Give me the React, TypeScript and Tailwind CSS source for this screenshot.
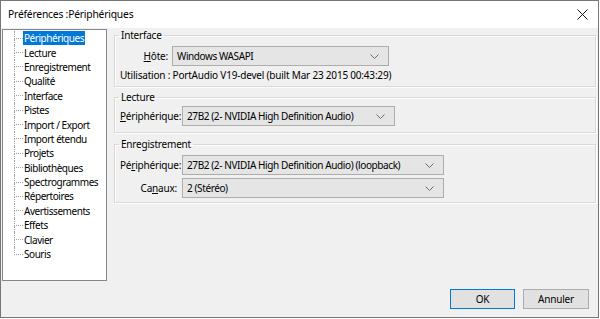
import type { ReactNode } from "react";

const items = [
  "Périphériques",
  "Lecture",
  "Enregistrement",
  "Qualité",
  "Interface",
  "Pistes",
  "Import / Export",
  "Import étendu",
  "Projets",
  "Bibliothèques",
  "Spectrogrammes",
  "Répertoires",
  "Avertissements",
  "Effets",
  "Clavier",
  "Souris",
];

function Chevron() {
  return (
    <svg width="9" height="5" viewBox="0 0 9 5" className="shrink-0">
      <path d="M0.5 0.5 L4.5 4.5 L8.5 0.5" fill="none" stroke="#6d6d6d" strokeWidth="1" />
    </svg>
  );
}

function Combo({ value, width }: { value: string; width: string }) {
  return (
    <div
      className={`flex h-[20px] ${width} items-center justify-between border border-[#adadad] bg-[#e5e5e5] pl-[4px] pr-[9px]`}
    >
      <span className="tracking-[-0.4px]">{value}</span>
      <Chevron />
    </div>
  );
}

function Group({ title, children, className }: { title: string; children: ReactNode; className?: string }) {
  return (
    <fieldset
      className={`border border-[#d8d8d8] px-0 shadow-[inset_1px_1px_0_#fff,1px_1px_0_#fff] ${className ?? ""}`}
    >
      <legend className="ml-[4px] px-[2px] leading-[15px]">{title}</legend>
      {children}
    </fieldset>
  );
}

export default function App() {
  return (
    <div
      className="flex h-[318px] w-[599px] flex-col whitespace-nowrap border border-[#767676] bg-[#f0f0f0] text-[10px] tracking-[-0.2px] text-black"
      style={{ fontFamily: '"Noto Sans", "Open Sans", sans-serif' }}
    >
      {/* barre de titre */}
      <div className="flex h-[27px] shrink-0 items-center justify-between bg-white pl-[7px] pr-[8px]">
        <span className="text-[10.3px]">Préférences :Périphériques</span>
        <svg width="11" height="11" viewBox="0 0 11 11" className="mr-[2px]">
          <path d="M0.5 0.5 L10.5 10.5 M10.5 0.5 L0.5 10.5" stroke="#111" strokeWidth="1" />
        </svg>
      </div>

      <div className="flex flex-1 flex-col">
        <div className="flex h-[253px] pt-[1px]">
          {/* arbre */}
          <div className="ml-[1px] h-[252px] w-[105px] border border-[#828790] bg-white pl-[11px] pt-[1px] tracking-[-0.45px]">
            {items.map((label, i) => (
              <div key={label} className="flex h-[14.4px] items-stretch">
                <div className="flex w-[9px] flex-col">
                  <div className="flex-1 border-b border-l border-dotted border-[#a0a0a0]" />
                  <div className={`flex-1 ${i < items.length - 1 ? "border-l border-dotted border-[#a0a0a0]" : ""}`} />
                </div>
                <span
                  className={`flex items-center px-[1px] leading-[14px] ${
                    i === 0 ? "bg-[#0078d7] text-white" : ""
                  }`}
                >
                  {label}
                </span>
              </div>
            ))}
          </div>

          {/* panneaux */}
          <div className="ml-[7px] flex w-[482px] flex-col">
            <Group title="Interface" className="-mt-[1px] h-[59px]">
              <div className="mt-[3px] flex items-center">
                <span className="w-[53px] text-right">
                  <u>H</u>ôte:
                </span>
                <div className="ml-[4px]">
                  <Combo value="Windows WASAPI" width="w-[217px]" />
                </div>
              </div>
              <div className="mt-[2px] pl-[5px] leading-[15px]">
                Utilisation : PortAudio V19-devel (built Mar 23 2015 00:43:29)
              </div>
            </Group>

            <Group title="Lecture" className="mt-[3px] h-[43px]">
              <div className="mt-[1px] flex items-center pl-[5px]">
                <span className="w-[62px]">
                  <u>P</u>ériphérique:
                </span>
                <Combo value="27B2 (2- NVIDIA High Definition Audio)" width="w-[213px]" />
              </div>
            </Group>

            <Group title="Enregistrement" className="mt-[4px] h-[66px]">
              <div className="mt-[3px] flex items-center pl-[5px]">
                <span className="w-[62px]">
                  Pé<u>r</u>iphérique:
                </span>
                <Combo value="27B2 (2- NVIDIA High Definition Audio) (loopback)" width="w-[262px]" />
              </div>
              <div className="mt-[3px] flex items-center pl-[5px]">
                <span className="w-[57px] text-right">
                  Ca<u>n</u>aux:
                </span>
                <div className="ml-[5px]">
                  <Combo value="2 (Stéréo)" width="w-[262px]" />
                </div>
              </div>
            </Group>
          </div>
        </div>

        {/* boutons */}
        <div className="mt-[8px] flex justify-end gap-[8px] pr-[9px]">
          <button className="flex h-[20px] w-[65px] items-center justify-center border border-[#0078d7] bg-[#e1e1e1]">
            OK
          </button>
          <button className="flex h-[20px] w-[66px] items-center justify-center border border-[#adadad] bg-[#e1e1e1]">
            Annuler
          </button>
        </div>
      </div>
    </div>
  );
}
